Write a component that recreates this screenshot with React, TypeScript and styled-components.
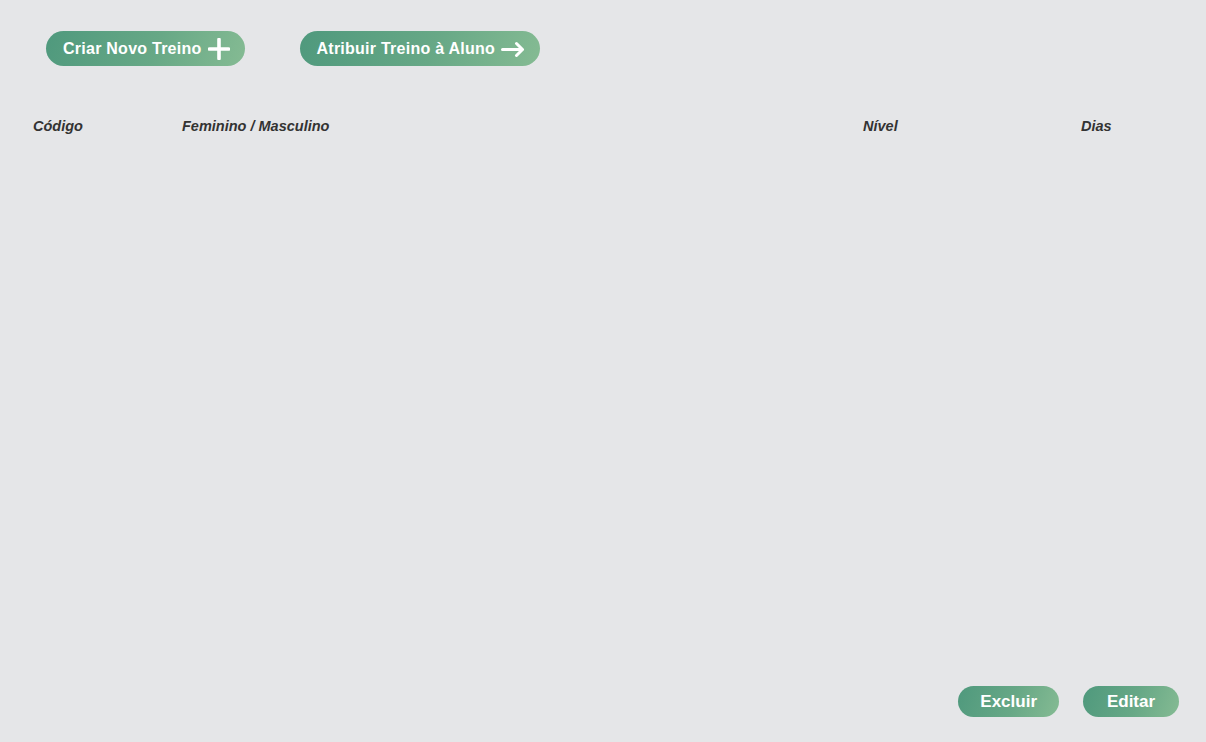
import React from "react";
import styled, { createGlobalStyle } from "styled-components";

const Global = createGlobalStyle`
  html, body { margin: 0; padding: 0; background: #e5e6e8; }
  body { font-family: "Liberation Sans", Arial, sans-serif; }
`;

const Page = styled.div`
  height: 100vh;
  box-sizing: border-box;
  display: flex;
  flex-direction: column;
  background: #e5e6e8;
`;

const Toolbar = styled.div`
  display: flex;
  align-items: center;
  gap: 55px;
  padding: 31px 0 0 46px;
`;

const PillButton = styled.button<{ $small?: boolean }>`
  display: inline-flex;
  align-items: center;
  justify-content: center;
  gap: 6px;
  height: ${(p) => (p.$small ? "31px" : "35px")};
  min-width: ${(p) => (p.$small ? "96px" : "0")};
  padding: ${(p) => (p.$small ? "0 22px" : "0 15px 0 17px")};
  border: none;
  border-radius: 18px;
  background: linear-gradient(110deg, #4f997d 0%, #67a886 55%, #85bb93 100%);
  color: #ffffff;
  font-family: "Liberation Sans", Arial, sans-serif;
  font-weight: 700;
  font-size: ${(p) => (p.$small ? "17px" : "16px")};
  letter-spacing: ${(p) => (p.$small ? "0" : "0.25px")};
  cursor: pointer;
  white-space: nowrap;
`;

const HeaderRow = styled.div`
  display: grid;
  grid-template-columns: 149px 681px 218px 1fr;
  padding: 51px 0 0 33px;
`;

const HeaderCell = styled.div`
  font-family: "Liberation Sans", Arial, sans-serif;
  font-style: italic;
  font-weight: 700;
  font-size: 14.5px;
  color: #333333;
  line-height: 18px;
`;

const Footer = styled.div`
  margin-top: auto;
  display: flex;
  justify-content: flex-end;
  gap: 24px;
  padding: 0 27px 25px 0;
`;

const PlusIcon = () => (
  <svg width="22" height="22" viewBox="0 0 22 22">
    <path d="M11 1.5 V20.5 M1.5 11 H20.5" stroke="#fff" strokeWidth="3.6" strokeLinecap="round" />
  </svg>
);

const ArrowIcon = () => (
  <svg width="24" height="16" viewBox="0 0 24 16">
    <path d="M1.5 8.5 H21.5 M15.5 2.5 L21.5 8.5 L15.5 14.5" stroke="#fff" strokeWidth="3" strokeLinecap="round" strokeLinejoin="round" fill="none" />
  </svg>
);

export default function App() {
  return (
    <>
      <Global />
      <Page>
        <Toolbar>
          <PillButton>
            Criar Novo Treino <PlusIcon />
          </PillButton>
          <PillButton>
            Atribuir Treino à Aluno <ArrowIcon />
          </PillButton>
        </Toolbar>
        <HeaderRow>
          <HeaderCell>Código</HeaderCell>
          <HeaderCell>Feminino / Masculino</HeaderCell>
          <HeaderCell>Nível</HeaderCell>
          <HeaderCell>Dias</HeaderCell>
        </HeaderRow>
        <Footer>
          <PillButton $small>Excluir</PillButton>
          <PillButton $small>Editar</PillButton>
        </Footer>
      </Page>
    </>
  );
}
